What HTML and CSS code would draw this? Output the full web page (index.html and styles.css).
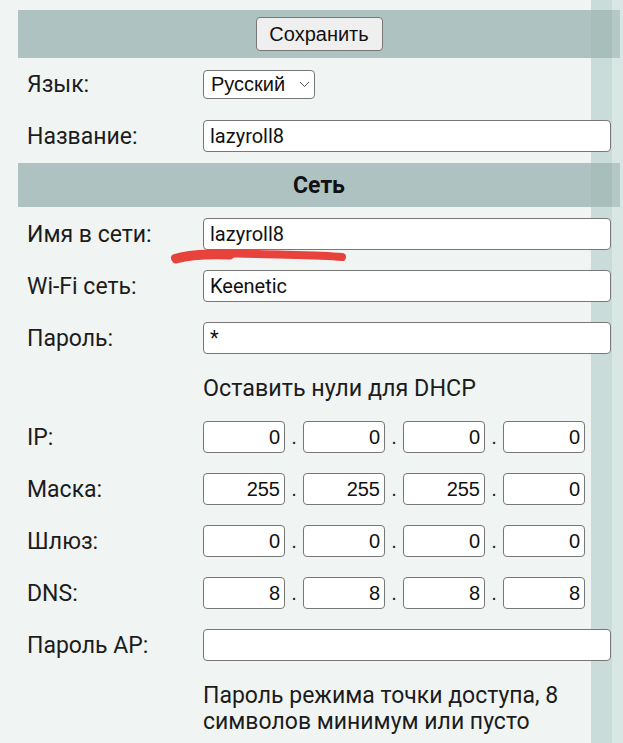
FILE: index.html
```html
<!DOCTYPE html>
<html lang="ru">
<head>
<meta charset="utf-8">
<title>Настройки</title>
<link rel="stylesheet" href="styles.css">
</head>
<body>
<div class="page">
  <div class="bar"><button class="btn" type="button">Сохранить</button></div>

  <div class="row">
    <span class="lbl">Язык:</span>
    <div class="sel"><span>Русский</span><svg class="chev" width="11" height="7" viewBox="0 0 11 7"><path d="M1 1 L5.5 5.5 L10 1" fill="none" stroke="#555" stroke-width="1"/></svg></div>
  </div>
  <div class="row">
    <span class="lbl">Название:</span>
    <input class="txt" type="text" value="lazyroll8">
  </div>

  <div class="bar bar-net">Сеть</div>

  <div class="row row-first">
    <span class="lbl">Имя в сети:</span>
    <input class="txt" type="text" value="lazyroll8">
  </div>
  <div class="row">
    <span class="lbl">Wi-Fi сеть:</span>
    <input class="txt" type="text" value="Keenetic">
  </div>
  <div class="row">
    <span class="lbl">Пароль:</span>
    <input class="txt" type="text" value="*">
  </div>
  <div class="row row-note">
    <span class="lbl"></span>
    <span class="note">Оставить нули для DHCP</span>
  </div>
  <div class="row">
    <span class="lbl">IP:</span>
    <div class="ip"><input class="num" value="0"><span class="dot">.</span><input class="num" value="0"><span class="dot">.</span><input class="num" value="0"><span class="dot">.</span><input class="num" value="0"></div>
  </div>
  <div class="row">
    <span class="lbl">Маска:</span>
    <div class="ip"><input class="num" value="255"><span class="dot">.</span><input class="num" value="255"><span class="dot">.</span><input class="num" value="255"><span class="dot">.</span><input class="num" value="0"></div>
  </div>
  <div class="row">
    <span class="lbl">Шлюз:</span>
    <div class="ip"><input class="num" value="0"><span class="dot">.</span><input class="num" value="0"><span class="dot">.</span><input class="num" value="0"><span class="dot">.</span><input class="num" value="0"></div>
  </div>
  <div class="row">
    <span class="lbl">DNS:</span>
    <div class="ip"><input class="num" value="8"><span class="dot">.</span><input class="num" value="8"><span class="dot">.</span><input class="num" value="8"><span class="dot">.</span><input class="num" value="8"></div>
  </div>
  <div class="row">
    <span class="lbl">Пароль AP:</span>
    <input class="txt" type="text" value="">
  </div>
  <p class="help">Пароль режима точки доступа, 8<br>символов минимум или пусто</p>
</div>
<svg class="mark" width="623" height="743" viewBox="0 0 623 743"><path d="M175 258 C 192 252 225 253 258 254 S 322 255 342 257" fill="none" stroke="#e8423d" stroke-width="8" stroke-linecap="round"/><path d="M176 259 C 190 255 205 254 230 255" fill="none" stroke="#e8423d" stroke-width="9" stroke-linecap="round"/></svg>
</body>
</html>
```
FILE: styles.css
```css
html, body {
  margin: 0;
  padding: 0;
}
body {
  position: relative;
  min-height: 743px;
  overflow: hidden;
  background: linear-gradient(to right, #f0f5f4 0, #f0f5f4 591px, #c9dcd9 591px, #c9dcd9 612px, #d8e7e4 612px);
  font-family: Roboto, "Noto Sans", sans-serif;
  color: #1c1c1c;
}
.page {
  width: 602px;
  margin-left: 18px;
  padding-top: 10px;
}
.bar {
  height: 48px;
  display: flex;
  align-items: center;
  justify-content: center;
  background: linear-gradient(to right, #aec3c1 0, #aec3c1 573px, #a8bebb 573px, #a8bebb 594px, #b4c8c5 594px);
}
.bar-net {
  height: 44px;
  margin-top: 1px;
  font-size: 23px;
  font-weight: 700;
  color: #111;
}
.btn {
  width: 127px;
  height: 34px;
  box-sizing: border-box;
  border: 1.5px solid #777;
  border-radius: 4px;
  background: #efefef;
  font: 20px "Liberation Sans", Arial, sans-serif;
  color: #111;
  padding: 0;
}
.row {
  display: flex;
  align-items: center;
  height: 52px;
}
.row-first {
  margin-top: 1px;
}
.row-note {
  height: 47px;
}
.lbl {
  flex: none;
  width: 185px;
  box-sizing: border-box;
  padding-left: 9px;
  font-size: 23px;
}
.txt {
  width: 408px;
  height: 32px;
  box-sizing: border-box;
  margin: 0;
  border: 1.5px solid #777;
  border-radius: 4px;
  background: #fff;
  padding: 0 6px;
  font: 20px Roboto, sans-serif;
  color: #111;
}
.sel {
  width: 112px;
  height: 29px;
  box-sizing: border-box;
  display: flex;
  align-items: center;
  justify-content: space-between;
  border: 1.5px solid #777;
  border-radius: 4px;
  background: #fff;
  padding: 0 4px 0 7px;
  font: 20px "Liberation Sans", Arial, sans-serif;
  color: #111;
}
.chev {
  display: block;
}
.note {
  font-size: 23.3px;
}
.ip {
  display: flex;
  align-items: baseline;
}
.num {
  width: 82px;
  height: 32px;
  box-sizing: border-box;
  margin: 0;
  border: 1.5px solid #777;
  border-radius: 4px;
  background: #fff;
  padding: 0 4px;
  text-align: right;
  font: 20px "Liberation Sans", Arial, sans-serif;
  color: #111;
}
.dot {
  width: 18px;
  text-align: center;
  font: 20px "Liberation Sans", Arial, sans-serif;
}
.help {
  margin: 12px 0 0;
  padding-left: 185px;
  font-size: 23px;
  line-height: 26px;
}
.mark {
  position: absolute;
  left: 0;
  top: 0;
  pointer-events: none;
}
```
